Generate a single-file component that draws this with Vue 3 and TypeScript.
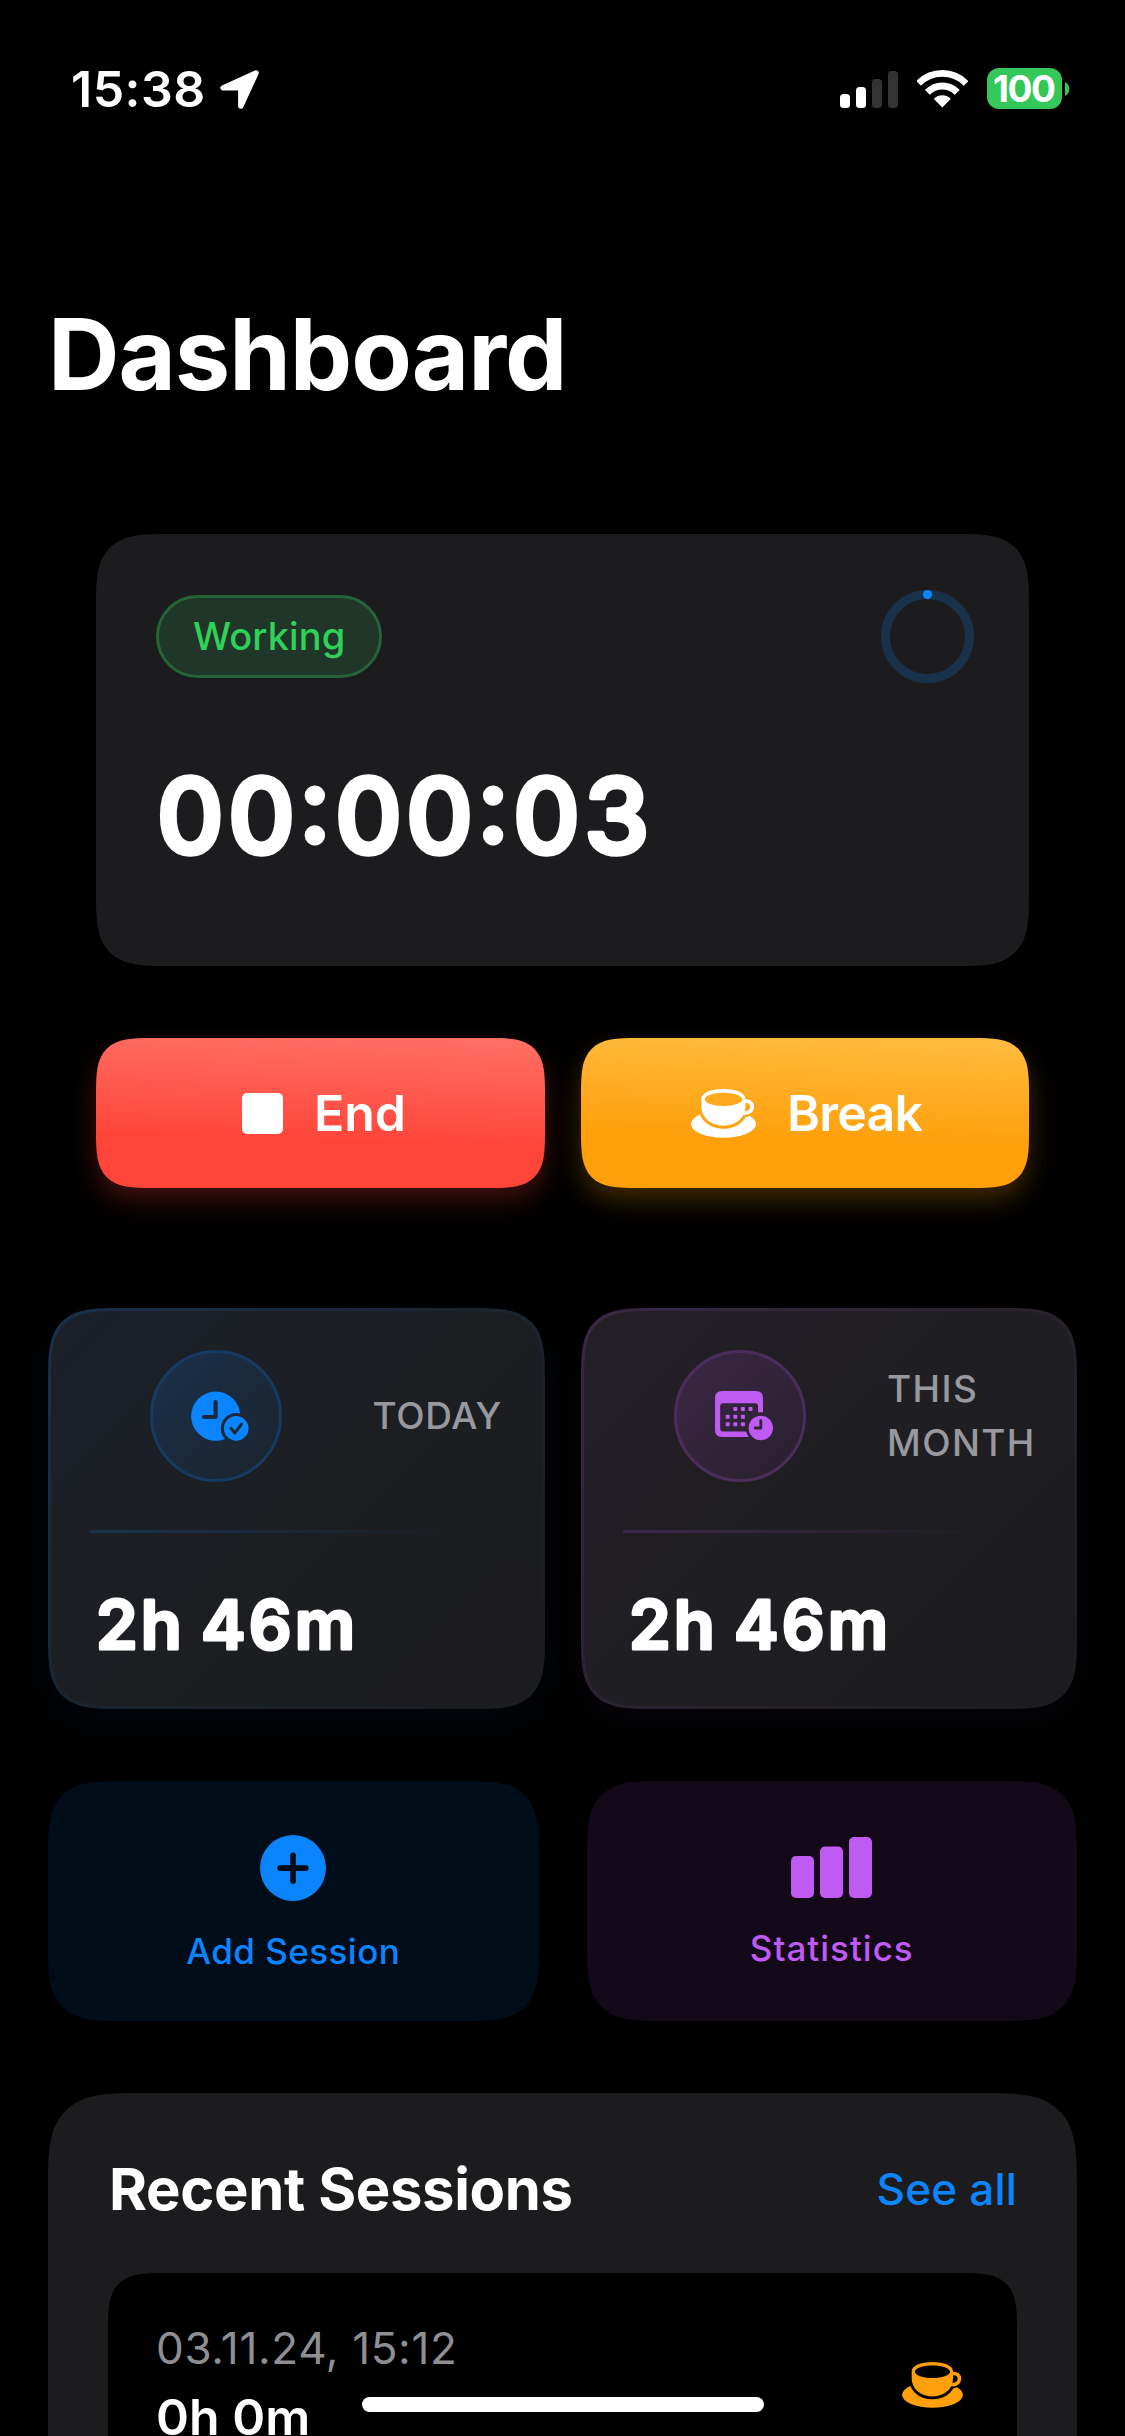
<script setup lang="ts">
interface StatCard {
  id: 'today' | 'month'
  lines: string[]
  value: string
}

interface Session {
  date: string
  duration: string
}

const elapsed = '00:00:03'

const stats: StatCard[] = [
  { id: 'today', lines: ['TODAY'], value: '2h 46m' },
  { id: 'month', lines: ['THIS', 'MONTH'], value: '2h 46m' },
]

const sessions: Session[] = [{ date: '03.11.24, 15:12', duration: '0h 0m' }]

const signal = [
  { height: 14, active: true },
  { height: 21, active: true },
  { height: 29, active: false },
  { height: 37, active: false },
]

const calendarDots = [
  [20.3, 18], [27.9, 18], [35.5, 18],
  [12.7, 25.7], [20.3, 25.7], [27.9, 25.7],
  [12.7, 33.2], [20.3, 33.2], [27.9, 33.2],
]
</script>

<template>
  <main class="screen">
    <svg class="defs" aria-hidden="true">
      <defs>
        <mask id="cup-gap" maskUnits="userSpaceOnUse" x="0" y="0" width="65" height="49">
          <rect width="65" height="49" fill="#fff" />
          <path
            d="M10.3 10 C10.3 4 20 0 32.4 0 C45 0 54.4 4 54.4 10 V17 C54.4 28 46 36.7 32.4 36.7 C19 36.7 10.3 28 10.3 17 Z"
            fill="#000" stroke="#000" stroke-width="6"
          />
          <path d="M52 12 H56 C61 12 62 24 55 25 H50" fill="none" stroke="#000" stroke-width="6" />
        </mask>
        <symbol id="cup" viewBox="0 0 65 49">
          <ellipse cx="32.5" cy="35" rx="32.5" ry="13.8" fill="currentColor" mask="url(#cup-gap)" />
          <path
            fill="currentColor" fill-rule="evenodd"
            d="M10.3 10 C10.3 4 20 0 32.4 0 C45 0 54.4 4 54.4 10 V17 C54.4 28 46 36.7 32.4 36.7 C19 36.7 10.3 28 10.3 17 Z M13.8 10.3 C13.8 14.2 22 17 32.5 17 C43 17 51.2 14.2 51.2 10.3 C51.2 6.5 43 3.7 32.5 3.7 C22 3.7 13.8 6.5 13.8 10.3 Z"
          />
          <path
            d="M53.6 12.4 C58.5 11.4 61.2 14.3 61.2 17.8 C61.2 21.8 57.8 24.4 52 24.2"
            fill="none" stroke="currentColor" stroke-width="3.8"
          />
        </symbol>
      </defs>
    </svg>

    <header class="status">
      <div class="status-side">
        <span class="clock">15:38</span>
        <svg class="location" width="39" height="39" viewBox="0 0 39 39">
          <path d="M36 3 L3.1 17.9 H20.8 V36 Z" fill="#fff" stroke="#fff" stroke-width="5.4" stroke-linejoin="round" />
        </svg>
      </div>
      <div class="status-side icons">
        <div class="signal">
          <i v-for="(bar, i) in signal" :key="i" :class="{ off: !bar.active }" :style="{ height: bar.height + 'px' }" />
        </div>
        <svg width="51" height="38" viewBox="0 0 51 38">
          <clipPath id="wifi-wedge"><path d="M25.3 37.5 L-14 -2.4 H64.6 Z" /></clipPath>
          <g clip-path="url(#wifi-wedge)">
            <circle cx="25.3" cy="36.6" r="33.2" fill="none" stroke="#fff" stroke-width="6.6" />
            <circle cx="25.3" cy="36.6" r="20.6" fill="none" stroke="#fff" stroke-width="7" />
            <circle cx="25.3" cy="37" r="11.8" fill="#fff" />
          </g>
        </svg>
        <div class="battery">
          <span class="level">100</span>
          <svg class="nub" width="5" height="14" viewBox="0 0 5 14"><path d="M0 0 Q4.4 2.4 4.4 7 T0 14 Z" fill="#34c759" /></svg>
        </div>
      </div>
    </header>

    <h1 class="title">Dashboard</h1>

    <section class="timer">
      <div class="timer-head">
        <span class="badge">Working</span>
        <svg width="93" height="93" viewBox="0 0 93 93">
          <circle cx="46.5" cy="46.5" r="42" fill="none" stroke="#19314a" stroke-width="9" />
          <circle cx="46.5" cy="4.6" r="4.6" fill="#0a84ff" />
        </svg>
      </div>
      <svg class="elapsed" width="560" height="120" viewBox="0 0 560 120">
        <text x="1" y="96.8" textLength="492" class="rounded elapsed-text">{{ elapsed }}</text>
      </svg>
    </section>

    <section class="controls">
      <button class="control end">
        <svg width="41" height="41" viewBox="0 0 41 41"><rect width="41" height="41" rx="5" fill="#fff" /></svg>
        <span>End</span>
      </button>
      <button class="control break">
        <svg class="control-cup" width="65" height="49"><use href="#cup" /></svg>
        <span>Break</span>
      </button>
    </section>

    <section class="stats">
      <article v-for="card in stats" :key="card.id" class="stat" :class="card.id">
        <div class="stat-head">
          <div class="stat-icon-cell">
            <div class="stat-icon">
              <svg v-if="card.id === 'today'" width="58" height="50" viewBox="0 0 58 50">
                <mask id="clock-cut" maskUnits="userSpaceOnUse" x="0" y="0" width="58" height="50">
                  <rect width="58" height="50" fill="#fff" />
                  <path d="M24.6 11 V26 H13" fill="none" stroke="#000" stroke-width="4.2" stroke-linecap="round" stroke-linejoin="round" />
                  <circle cx="45.2" cy="37.4" r="15.4" fill="#000" />
                </mask>
                <mask id="check-cut" maskUnits="userSpaceOnUse" x="0" y="0" width="58" height="50">
                  <rect width="58" height="50" fill="#fff" />
                  <path d="M40 37.4 L43.8 42 L50.4 33.3" fill="none" stroke="#000" stroke-width="3" stroke-linecap="round" stroke-linejoin="round" />
                </mask>
                <circle cx="24.7" cy="25.2" r="24.6" fill="#0a84ff" mask="url(#clock-cut)" />
                <circle cx="45.2" cy="37.4" r="12.3" fill="#0a84ff" mask="url(#check-cut)" />
              </svg>
              <svg v-else width="58" height="50" viewBox="0 0 58 50">
                <mask id="calendar-cut" maskUnits="userSpaceOnUse" x="0" y="0" width="58" height="50">
                  <rect width="58" height="50" fill="#fff" />
                  <circle cx="45.8" cy="36.4" r="15.2" fill="#000" />
                </mask>
                <mask id="badge-cut" maskUnits="userSpaceOnUse" x="0" y="0" width="58" height="50">
                  <rect width="58" height="50" fill="#fff" />
                  <path d="M45.8 29.6 V37 H40.2" fill="none" stroke="#000" stroke-width="2.8" stroke-linecap="round" stroke-linejoin="round" />
                </mask>
                <g mask="url(#calendar-cut)" fill="#bf5af2">
                  <path fill-rule="evenodd" d="M7 0 H41 Q48 0 48 7 V39 Q48 46 41 46 H7 Q0 46 0 39 V7 Q0 0 7 0 Z M8.2 12.3 Q5.2 12.3 5.2 15.3 V37.6 Q5.2 40.6 8.2 40.6 H40 Q43 40.6 43 37.6 V15.3 Q43 12.3 40 12.3 Z" />
                  <rect v-for="([x, y], i) in calendarDots" :key="i" :x="x - 2" :y="y - 2" width="4" height="4" rx="0.8" />
                </g>
                <circle cx="45.8" cy="37" r="12.2" fill="#bf5af2" mask="url(#badge-cut)" />
              </svg>
            </div>
          </div>
          <div class="stat-label">
            <span v-for="line in card.lines" :key="line">{{ line }}</span>
          </div>
        </div>
        <div class="divider" />
        <svg class="stat-value" width="300" height="70" viewBox="0 0 300 70">
          <text x="6" y="58.6" textLength="259" class="rounded value-text">{{ card.value }}</text>
        </svg>
      </article>
    </section>

    <section class="actions">
      <button class="action add">
        <svg width="66" height="66" viewBox="0 0 66 66">
          <circle cx="33" cy="33" r="33" fill="#0a84ff" />
          <path d="M33 20.3 V46 M20.2 33.1 H45.8" stroke="#010d19" stroke-width="5.7" stroke-linecap="round" />
        </svg>
        <span>Add Session</span>
      </button>
      <button class="action statistics">
        <svg width="81" height="61" viewBox="0 0 81 61">
          <g fill="#bf5af2">
            <rect y="19" width="23" height="42" rx="5" />
            <rect x="29" y="9.5" width="23" height="51.5" rx="5" />
            <rect x="58" width="23" height="61" rx="5" />
          </g>
        </svg>
        <span>Statistics</span>
      </button>
    </section>

    <section class="sessions">
      <div class="sessions-head">
        <h2>Recent Sessions</h2>
        <a>See all</a>
      </div>
      <article v-for="session in sessions" :key="session.date" class="session">
        <div class="session-info">
          <span class="date">{{ session.date }}</span>
          <span class="duration">{{ session.duration }}</span>
        </div>
        <svg class="session-cup" width="61" height="46"><use href="#cup" /></svg>
      </article>
    </section>

    <div class="home-indicator" />
  </main>
</template>

<style>
html,
body {
  background: #000;
}
</style>

<style scoped>
.screen {
  position: relative;
  width: 1125px;
  height: 2436px;
  overflow: hidden;
  display: flex;
  flex-direction: column;
  background: #000;
  color: #fff;
  font-family: Inter, "Liberation Sans", sans-serif;
}

svg {
  display: block;
  flex: none;
}

.defs {
  position: absolute;
  width: 0;
  height: 0;
}

button {
  border: 0;
  padding: 0;
  margin: 0;
  font: inherit;
  color: inherit;
}

/* Status bar */
.status {
  flex: none;
  display: flex;
  justify-content: space-between;
  height: 178px;
  padding: 0 63px 0 71px;
}

.status-side {
  display: flex;
  align-items: center;
}

.clock {
  width: 149px;
  font-size: 50px;
  font-weight: 600;
  letter-spacing: 0.5px;
}

.location {
  margin-top: 1px;
}

.icons {
  gap: 19px;
}

.signal {
  display: flex;
  align-items: flex-end;
  gap: 6px;
  height: 37px;
}

.signal i {
  width: 10px;
  border-radius: 3.5px;
  background: #fff;
}

.signal i.off {
  background: #333;
}

.battery {
  position: relative;
  width: 75px;
  height: 41px;
  margin-top: -1px;
  border-radius: 12px;
  background: #34c759;
}

.level {
  display: block;
  font-size: 37px;
  font-weight: 700;
  line-height: 41px;
  letter-spacing: -1.4px;
  text-indent: 6px;
}

.nub {
  position: absolute;
  left: 78px;
  top: 14px;
}

/* Title */
.title {
  flex: none;
  margin: 116px 48px 120px;
  font-size: 99px;
  font-weight: 700;
  line-height: 120px;
  letter-spacing: -1.06px;
}

/* Timer */
.timer {
  flex: none;
  box-sizing: border-box;
  height: 432px;
  margin: 0 96px;
  padding: 55.5px 55.5px 0 60px;
  border-radius: 72px;
  corner-shape: superellipse(1.7);
  background: #1c1c1e;
}

.timer-head {
  display: flex;
  align-items: center;
  justify-content: space-between;
}

.badge {
  box-sizing: border-box;
  width: 226px;
  height: 83px;
  padding-left: 34px;
  border: 3px solid #246437;
  border-radius: 42px;
  background: #203628;
  color: #30d158;
  font-size: 38px;
  font-weight: 500;
  line-height: 77px;
  letter-spacing: 0.1px;
}

.elapsed {
  margin-top: 73.5px;
  overflow: visible;
}

.rounded {
  fill: #fff;
  stroke: #fff;
  stroke-linejoin: round;
}

.elapsed-text {
  font-size: 103px;
  font-weight: 500;
  stroke-width: 5.5px;
}

.value-text {
  font-size: 67px;
  font-weight: 600;
  stroke-width: 3px;
  word-spacing: -4px;
}

/* Controls */
.controls {
  flex: none;
  display: grid;
  grid-template-columns: 449px 448px;
  gap: 36px;
  margin: 72px 96px 0;
}

.control {
  box-sizing: border-box;
  display: flex;
  align-items: center;
  height: 150px;
  border-radius: 56px;
  corner-shape: superellipse(1.7);
  font-size: 50px;
  font-weight: 600;
}

.end {
  padding-left: 146px;
  gap: 31px;
  background: linear-gradient(178deg, #ff7066, #ff453a 67%);
  background: linear-gradient(182deg, #ff7066, #ff453a 67%);
  box-shadow: 0 12px 26px rgba(255, 69, 58, 0.25);
}

.break {
  padding-left: 110px;
  gap: 31px;
  background: linear-gradient(182deg, #ffbc41, #ff9f0a 67%);
  box-shadow: 0 12px 26px rgba(255, 159, 10, 0.25);
  letter-spacing: -0.74px;
}

/* Stat cards */
.stats {
  flex: none;
  display: flex;
  gap: 36px;
  margin: 120px 48px 0;
}

.stat {
  box-sizing: border-box;
  flex: 1;
  height: 401px;
  padding: 39px;
  border: 3px solid transparent;
  border-radius: 72px;
  corner-shape: superellipse(1.7);
}

.today {
  background:
    linear-gradient(135deg, #1b2029, #1c1e22 50%, #1c1c1e) padding-box,
    linear-gradient(135deg, #19304a, #1b232d 55%, #1c1c1e) border-box;
  box-shadow: 0 12px 36px rgba(10, 132, 255, 0.05);
}

.month {
  background:
    linear-gradient(135deg, #231f27, #1f1e22 50%, #1c1c1e) padding-box,
    linear-gradient(135deg, #3a2744, #28212d 55%, #1c1c1e) border-box;
  box-shadow: 0 12px 36px rgba(191, 90, 242, 0.04);
}

.stat-head {
  display: flex;
  align-items: center;
  gap: 30px;
  height: 132px;
}

.stat-icon-cell {
  flex: 1;
  display: flex;
  justify-content: center;
}

.stat-icon {
  box-sizing: border-box;
  display: flex;
  width: 132px;
  height: 132px;
  padding: 37.5px 0 0 38px;
  border: 3px solid #173a61;
  border-radius: 50%;
  background: linear-gradient(135deg, #1a304a, #1b242e);
}

.month .stat-icon {
  border-color: #4b2d5d;
  background: linear-gradient(135deg, #3a2745, #29202d);
}

.stat-label {
  display: flex;
  flex-direction: column;
  width: 130px;
  color: #98989f;
  font-size: 37px;
  font-weight: 500;
  line-height: 54px;
  letter-spacing: 0.7px;
}

.month .stat-label {
  width: 148px;
  letter-spacing: 1.4px;
}

.divider {
  height: 3px;
  margin-top: 48px;
  background: linear-gradient(90deg, #19324c, rgba(25, 50, 76, 0) 90%);
}

.month .divider {
  background: linear-gradient(90deg, #3d2849, rgba(61, 40, 73, 0) 90%);
}

.stat-value {
  margin-top: 57px;
  overflow: visible;
}

/* Actions */
.actions {
  flex: none;
  display: flex;
  gap: 48px;
  margin: 72px 48px 0;
}

.action {
  box-sizing: border-box;
  flex: 1;
  display: flex;
  flex-direction: column;
  align-items: center;
  height: 240px;
  border-radius: 74px;
  corner-shape: superellipse(1.7);
  font-size: 35px;
  font-weight: 500;
  line-height: 42px;
}

.add {
  padding-top: 54px;
  gap: 28.5px;
  background: #010d19;
  color: #0a84ff;
  letter-spacing: 0.45px;
}

.statistics {
  padding-top: 56px;
  gap: 28.5px;
  background: #130918;
  color: #bf5af2;
  letter-spacing: 1px;
}

/* Sessions */
.sessions {
  flex: none;
  box-sizing: border-box;
  height: 640px;
  margin: 72px 48px 0;
  padding: 60px;
  border-radius: 92px;
  corner-shape: superellipse(1.7);
  background: #1c1c1e;
}

.sessions-head {
  display: flex;
  align-items: center;
  justify-content: space-between;
  height: 72px;
}

h2 {
  margin: 0 0 0 1px;
  font-size: 58px;
  font-weight: 700;
  letter-spacing: -0.36px;
}

a {
  color: #0a84ff;
  font-size: 44px;
  font-weight: 500;
  letter-spacing: 0.2px;
}

.session {
  display: flex;
  align-items: center;
  justify-content: space-between;
  margin-top: 48px;
  padding: 48px 54px 48px 48px;
  border-radius: 56px;
  corner-shape: superellipse(1.7);
  background: #000;
}

.session-info {
  display: flex;
  flex-direction: column;
}

.date {
  color: #8e8e93;
  font-size: 44px;
  line-height: 54px;
  letter-spacing: 0.67px;
}

.duration {
  margin-top: 12px;
  font-size: 50px;
  font-weight: 600;
  line-height: 61px;
}

.session-cup {
  color: #ff9f0a;
}

.home-indicator {
  position: absolute;
  left: 362px;
  top: 2397px;
  width: 402px;
  height: 15px;
  border-radius: 8px;
  background: #fff;
}
</style>
